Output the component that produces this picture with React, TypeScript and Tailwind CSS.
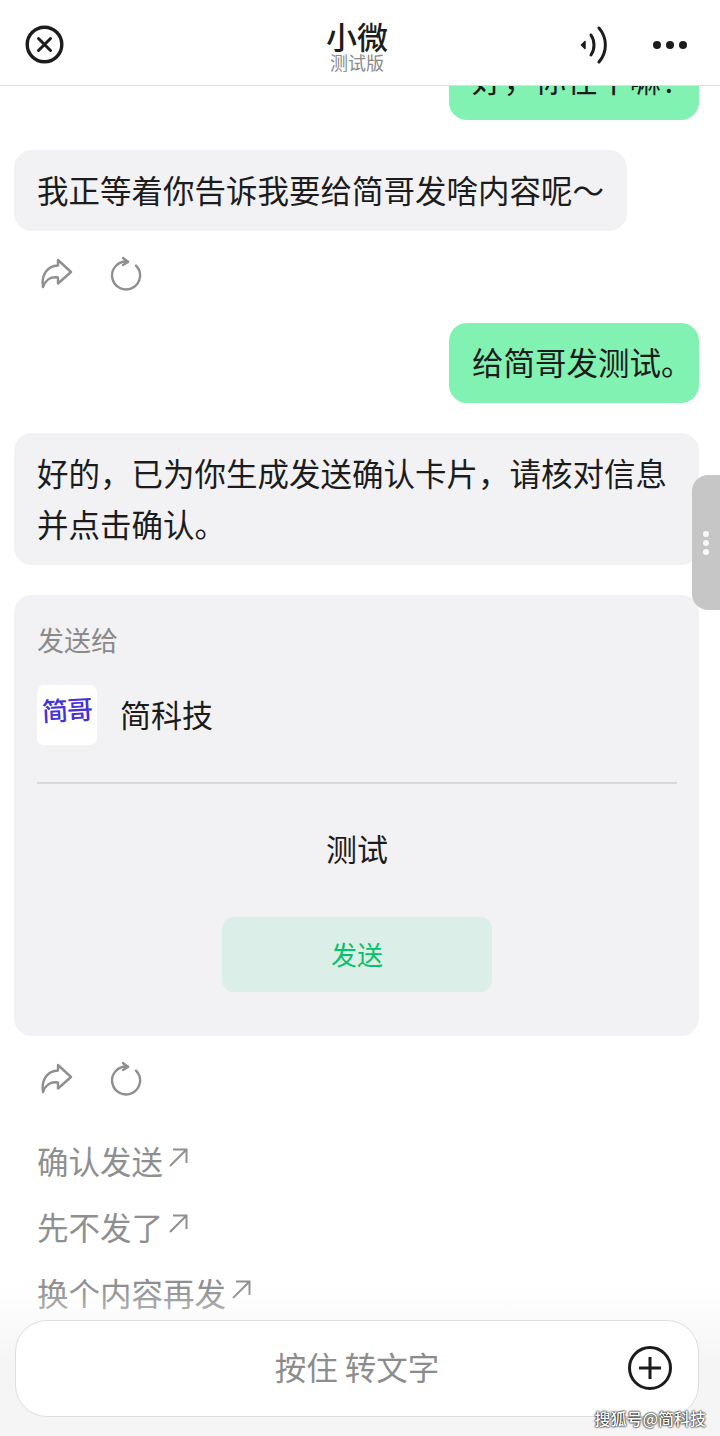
const actions = ["确认发送", "先不发了", "换个内容再发"];

function ShareIcon() {
  return (
    <svg width="34" height="34" viewBox="0 0 34 34" fill="none" stroke="#8f8f8f" strokeWidth="2.4" strokeLinejoin="round" strokeLinecap="round">
      <path d="M2 31 C0 18 7 10 17 9.5 V4 L30 16 L17 27.5 V21.5 C9 20 4 25 2 31 Z" />
    </svg>
  );
}

function RetryIcon() {
  return (
    <svg width="34" height="36" viewBox="0 0 34 36" fill="none" stroke="#8f8f8f" strokeWidth="2.4" strokeLinecap="round" strokeLinejoin="round">
      <path d="M27 9.6 A14 14 0 1 1 19 5.6" />
      <path d="M14 2 L19 6 L14 9" />
    </svg>
  );
}

function MessageActions() {
  return (
    <div className="flex h-[92px] items-start gap-[34px] pl-[27px] pt-[25px]">
      <ShareIcon />
      <RetryIcon />
    </div>
  );
}

function NorthEast() {
  return (
    <svg width="19" height="19" viewBox="0 0 19 19" fill="none" stroke="#8f8f8f" strokeWidth="2">
      <path d="M1 18 L17 2 M4 1.5 H17.5 V15" />
    </svg>
  );
}

export default function App() {
  return (
    <div className="relative h-[1436px] w-[720px] overflow-hidden bg-white font-['Noto_Sans_CJK_SC','Noto_Sans',sans-serif] text-[#1c1c1c]">
      <header className="relative z-10 flex h-[86px] items-center justify-between border-b border-[#dddddd] bg-white pl-[25px] pr-[33px] pt-[4px]">
        <svg width="39" height="39" viewBox="0 0 39 39" fill="none" stroke="#1c1c1c" strokeWidth="3.4" strokeLinecap="round">
          <circle cx="19.5" cy="19.5" r="17.3" />
          <path d="M13.5 13.5 L25.5 25.5 M25.5 13.5 L13.5 25.5" strokeWidth="3" />
        </svg>
        <div className="absolute left-[257px] top-[19px] flex w-[200px] flex-col items-center">
          <span className="text-[31px] font-medium leading-[33px]">小微</span>
          <span className="text-[18px] leading-[20px] text-[#8a8a8a]">测试版</span>
        </div>
        <div className="flex items-center gap-[45px]">
          <svg width="28" height="38" viewBox="0 0 28 38" fill="none" stroke="#1c1c1c" strokeWidth="3" strokeLinecap="round">
            <path d="M5 15.5 L1.5 19 L5 22.5 Z" fill="#1c1c1c" strokeWidth="1.5" strokeLinejoin="round" />
            <path d="M11 9 C15 15 15 23 11 29" />
            <path d="M19 2 C27.5 12 27.5 26 19 36" />
          </svg>
          <div className="flex items-center gap-[5px]">
            <span className="h-[8px] w-[8px] rounded-full bg-[#1c1c1c]" />
            <span className="h-[8px] w-[8px] rounded-full bg-[#1c1c1c]" />
            <span className="h-[8px] w-[8px] rounded-full bg-[#1c1c1c]" />
          </div>
        </div>
      </header>

      <main className="mt-[-47px] flex flex-col pl-[14px] pr-[21px] text-[31.5px] leading-[51px]">
        <div className="w-[250px] self-end whitespace-nowrap rounded-[18px] bg-[#82f2b2] pb-[16px] pl-[23px] pt-[14px]">好，你在干嘛！</div>

        <div className="mt-[30px] w-[613px] whitespace-nowrap rounded-[18px] bg-[#f2f2f4] pb-[16px] pl-[23px] pt-[14px]">
          我正等着你告诉我要给简哥发啥内容呢～
        </div>
        <MessageActions />

        <div className="w-[250px] self-end whitespace-nowrap rounded-[18px] bg-[#82f2b2] pb-[16px] pl-[23px] pt-[13px]">给简哥发测试。</div>

        <div className="mt-[30px] rounded-[18px] bg-[#f2f2f4] pb-[16px] pl-[23px] pr-[24px] pt-[14px]">
          好的，已为你生成发送确认卡片，请核对信息并点击确认。
        </div>

        <section className="mt-[30px] flex h-[441px] flex-col rounded-[18px] bg-[#f2f2f4] pl-[23px] pr-[22px] pt-[24px]">
          <div className="text-[27px] leading-[42px] text-[#8a8a8a]">发送给</div>
          <div className="mt-[24px] flex items-center gap-[23px]">
            <div className="flex h-[60px] w-[60px] items-center justify-center rounded-[7px] bg-white pb-[8px] font-['DejaVu_Serif','Noto_Sans_CJK_SC',serif] text-[26px] font-medium leading-none text-[#4630dc]">
              <span className="-rotate-3 whitespace-nowrap tracking-[-1px]">简哥</span>
            </div>
            <span className="pb-[2px] text-[31px] leading-[58px]">简科技</span>
          </div>
          <div className="mt-[37px] border-t-2 border-[#d8d8da]" />
          <div className="mt-[39px] text-center text-[31px] leading-[50px]">测试</div>
          <button className="mt-[44px] h-[75px] w-[270px] self-center rounded-[12px] bg-[#dceee8] pb-[3px] text-[26px] text-[#07c16a]">
            发送
          </button>
        </section>
        <MessageActions />

        <div className="mt-[-1px] flex flex-col pl-[23px] text-[#8f8f8f]">
          {actions.map((label) => (
            <div key={label} className="flex h-[66px] items-center gap-[6px]">
              <span>{label}</span>
              <span className="mt-[-6px]"><NorthEast /></span>
            </div>
          ))}
        </div>
      </main>

      <aside className="absolute right-0 top-[475px] flex h-[135px] w-[28px] flex-col items-center justify-center gap-[3px] rounded-l-[16px] bg-[#c6c6c6]">
        <span className="h-[6px] w-[6px] rounded-full bg-white/90" />
        <span className="h-[6px] w-[6px] rounded-full bg-white/90" />
        <span className="h-[6px] w-[6px] rounded-full bg-white/90" />
      </aside>

      <div className="absolute inset-x-0 bottom-0 h-[150px] bg-gradient-to-b from-white/0 to-[#f5f5f5] to-50%" />

      <div className="absolute bottom-[19px] left-[15px] flex h-[97px] w-[684px] items-center justify-center rounded-[32px] border border-[#dedede] bg-white pb-[4px] text-[31.5px] text-[#8c8c8c]">
        按住 转文字
        <svg className="absolute right-[25px] top-[24px]" width="46" height="46" viewBox="0 0 46 46" fill="none" stroke="#1c1c1c" strokeWidth="3">
          <circle cx="23" cy="23" r="20.5" />
          <path d="M12 23 H34 M23 12 V34" />
        </svg>
      </div>

      <div className="absolute bottom-[6px] right-[14px] text-[16px] font-medium leading-[24px] text-white [text-shadow:0_0_2px_#000,0_0_2px_#000]">
        搜狐号@简科技
      </div>
    </div>
  );
}
